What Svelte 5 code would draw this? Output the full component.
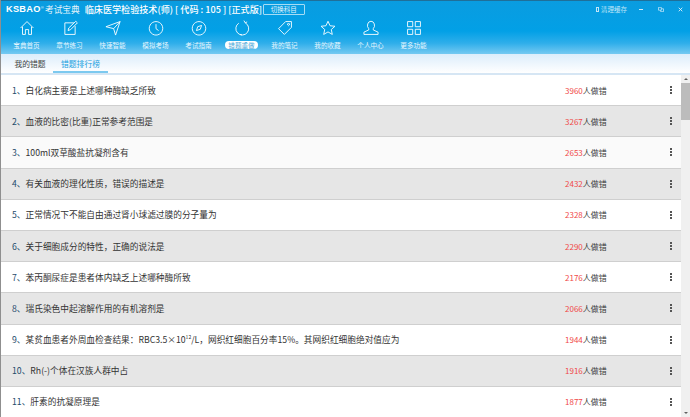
<script>
  const nav = [
    { label: '宝典首页', d: 'M4 14 L14 4 L24 14 M7 12 V24 H11.5 V16.5 H16.5 V24 H21 V12' },
    { label: '章节练习', d: 'M20 6 H6 V24 H22 V11 M11 18 L12 14 L23 3.5 L25.5 6 L15 16.5 Z' },
    { label: '快速智能', d: 'M3 12 L25 4 L18 25 L15 15 Z M15 15 L25 4' },
    { label: '模拟考场', d: 'M14 4 A10.5 10.5 0 1 0 14.01 4 M14 8 V15 L18 18' },
    { label: '考试指南', d: 'M14 4 A10.5 10.5 0 1 0 14.01 4 M10 18 L12 12 L18 10 L16 16 Z' },
    { label: '错题重做', d: 'M19 6 A10 10 0 1 1 9 6.5 M19 6 L17 2.5 M19 6 L22 4.5 M11 24 L14 25' },
    { label: '我的笔记', d: 'M15 4 H24 V13 L13 24 L4 15 Z M19.5 7 A1.5 1.5 0 1 0 19.51 7' },
    { label: '我的收藏', d: 'M14 3.5 L17.2 10.5 L24.8 11.3 L19.1 16.4 L20.7 24 L14 20.1 L7.3 24 L8.9 16.4 L3.2 11.3 L10.8 10.5 Z' },
    { label: '个人中心', d: 'M14 3.5 A5.5 6.5 0 0 1 17.5 15 V17 L25 20.5 V24 H3 V20.5 L10.5 17 V15 A5.5 6.5 0 0 1 14 3.5' },
    { label: '更多功能', d: 'M4 4 H12 V12 H4 Z M16 4 H24 V12 H16 Z M4 16 H12 V24 H4 Z M16 16 H24 V24 H16 Z' }
  ];
  const rows = [
    ['1、', '白化病主要是上述哪种酶缺乏所致', 3960],
    ['2、', '血液的比密(比重)正常参考范围是', 3267],
    ['3、', '100ml双草酸盐抗凝剂含有', 2653],
    ['4、', '有关血液的理化性质，错误的描述是', 2432],
    ['5、', '正常情况下不能自由通过肾小球滤过膜的分子量为', 2328],
    ['6、', '关于细胞成分的特性，正确的说法是', 2290],
    ['7、', '苯丙酮尿症是患者体内缺乏上述哪种酶所致', 2176],
    ['8、', '瑞氏染色中起溶解作用的有机溶剂是', 2066],
    ['9、', null, 1944],
    ['10、', 'Rh(-)个体在汉族人群中占', 1916],
    ['11、', '肝素的抗凝原理是', 1877]
  ];
</script>

<div class="win">
  <header class="head">
    <div class="top">
      <span class="logo">KSBAO<sup>®</sup></span>
      <span class="brand">考试宝典</span>
      <span class="title">临床医学检验技术(师) [ 代码 : 105 ] [正式版]</span>
      <span class="switch">切换科目</span>
      <span class="spacer"></span>
      <span class="clear"><i></i>清理缓存</span>
      <span class="ctl min"></span>
      <svg class="ctl-svg" viewBox="0 0 8 7" width="6" height="5"><path d="M.5.5h4v4h-4zM4.5 2.5h3v4h-4v-2" fill="none" stroke="#cfeafa"/></svg>
      <svg class="ctl-svg close" viewBox="0 0 7 7" width="5" height="5"><path d="M1 1l5 5M6 1L1 6" stroke="#e4f4fd" stroke-width="1.2"/></svg>
    </div>
    <nav class="nav">
      {#each nav as item, i}
        <div class="nav-item">
          <svg viewBox="0 0 28 28" width="18" height="18"><path d={item.d} fill="none" stroke="#fff" stroke-width="1.5" opacity=".92"/></svg>
          <span class="nav-label" class:active={i === 5}>{item.label}</span>
        </div>
      {/each}
    </nav>
  </header>

  <div class="tabs">
    <span class="tab">我的错题</span>
    <span class="tab on">错题排行榜</span>
  </div>

  <div class="body">
    <div class="list">
      {#each rows as r, i}
        <div class="row" class:alt={i % 2 === 1} class:soft={i === 2}>
          <span class="q"><span class="num">{r[0]}</span>{#if r[1]}{r[1]}{:else}某贫血患者外周血检查结果：RBC3.5×10<sup>12</sup>/L，网织红细胞百分率15%。其网织红细胞绝对值应为{/if}</span>
          <span class="count"><b>{r[2]}</b>人做错</span>
          <span class="more"><i></i><i></i><i></i></span>
        </div>
      {/each}
    </div>
    <div class="scroll">
      <span class="arrow up"></span>
      <span class="thumb"></span>
      <span class="arrow down"></span>
    </div>
  </div>
</div>

<style>
  :global(body) { margin: 0; background: #fff; overflow: hidden; }
  .win {
    width: 690px; height: 417px; overflow: hidden; display: flex; flex-direction: column;
    box-sizing: border-box; border-left: 1px solid #8f8f8f;
    font-family: "Noto Sans CJK SC", "Liberation Sans", sans-serif; color: #333;
  }
  .head {
    height: 54px; flex: none; color: #fff;
    background: linear-gradient(#0a9ce0 0, #02a0e6 30px, #2eaeea 42px, #7cccf2 54px);
    border-top: 1px solid #1f6f99; box-sizing: border-box;
  }
  .top { height: 16px; display: flex; align-items: center; padding-left: 5px; }
  .logo { font: bold 9.2px "Liberation Sans", sans-serif; letter-spacing: .3px; white-space: nowrap; }
  .logo sup { font-size: 4px; font-weight: normal; vertical-align: 3px; line-height: 0; }
  .brand { font-size: 8.7px; margin-left: 1px; opacity: .9; white-space: nowrap; }
  .title { font-size: 9.1px; font-weight: 500; margin-left: 5px; width: 175px; white-space: nowrap; }
  .switch {
    font-size: 6.5px; width: 40px; height: 9px; line-height: 9px; text-align: center;
    border: 1px solid #b8e3f7; border-radius: 1px; margin-left: 3px; opacity: .9;
  }
  .spacer { flex: 1; }
  .clear { font-size: 6.5px; display: flex; align-items: center; gap: 2px; color: #bfe5f8; width: 31px; white-space: nowrap; }
  .clear i { width: 3px; height: 3px; border: 1px solid #bfe5f8; display: block; }
  .ctl.min { width: 4px; height: 1px; background: #cfeafa; margin-left: 12px; }
  .ctl-svg { margin-left: 15px; }
  .ctl-svg.close { margin-left: 14px; margin-right: 7px; }
  .nav { display: flex; padding-left: 4px; }
  .nav-item { width: 43px; display: flex; flex-direction: column; align-items: center; }
  .nav-item svg { display: block; margin-top: 2px; }
  .nav-label {
    font-size: 6.6px; line-height: 8px; margin-top: 4px; padding: 0 3px; white-space: nowrap;
    color: #e6f6fe; border-radius: 4px;
  }
  .nav-label.active { background: #fff; color: #4aa8d8; }
  .tabs {
    height: 19px; flex: none; display: flex; padding-left: 6px; box-sizing: border-box;
    background: linear-gradient(#dcedfb, #fff);
  }
  .tab { width: 46px; text-align: center; font-size: 7.8px; line-height: 19px; color: #444; white-space: nowrap; }
  .tab.on { width: 55px; color: #20a0e0; box-shadow: inset 0 -2px 0 #7cc9ef; }
  .body { flex: 1; min-height: 0; display: flex; border-top: 2px solid #d6e6f4; }
  .list { flex: 1; min-width: 0; overflow: hidden; }
  .row {
    height: 31.2px; box-sizing: border-box; display: flex; align-items: center;
    border-bottom: 1px solid #cfcfcf; background: #fff; padding-left: 11px;
    font-size: 8.7px;
  }
  .row.alt { background: #e6e6e6; }
  .row.soft { background: #fafafa; }
  .q { flex: 1; white-space: nowrap; color: #333; }
  .num { color: #1e4b6b; }
  .q sup { font-size: 5px; line-height: 0; }
  .count { width: 48px; color: #3a3a3a; white-space: nowrap; font-size: 8px; }
  .count b { font-weight: 400; color: #f04848; }
  .more { width: 11px; margin-left: 57px; display: flex; flex-direction: column; gap: 1px; align-items: flex-start; flex: none; }
  .more i { width: 2px; height: 2px; background: #555; display: block; }
  .scroll { width: 9px; flex: none; background: #f0f0f0; display: flex; flex-direction: column; align-items: center; position: relative; }
  .arrow { width: 0; height: 0; border-left: 2px solid transparent; border-right: 2px solid transparent; margin: 3px 0; flex: none; }
  .arrow.up { border-bottom: 2px solid #606060; }
  .arrow.down { border-top: 2px solid #606060; margin-top: auto; }
  .thumb { width: 100%; height: 37px; background: #bcbcbc; }
</style>
